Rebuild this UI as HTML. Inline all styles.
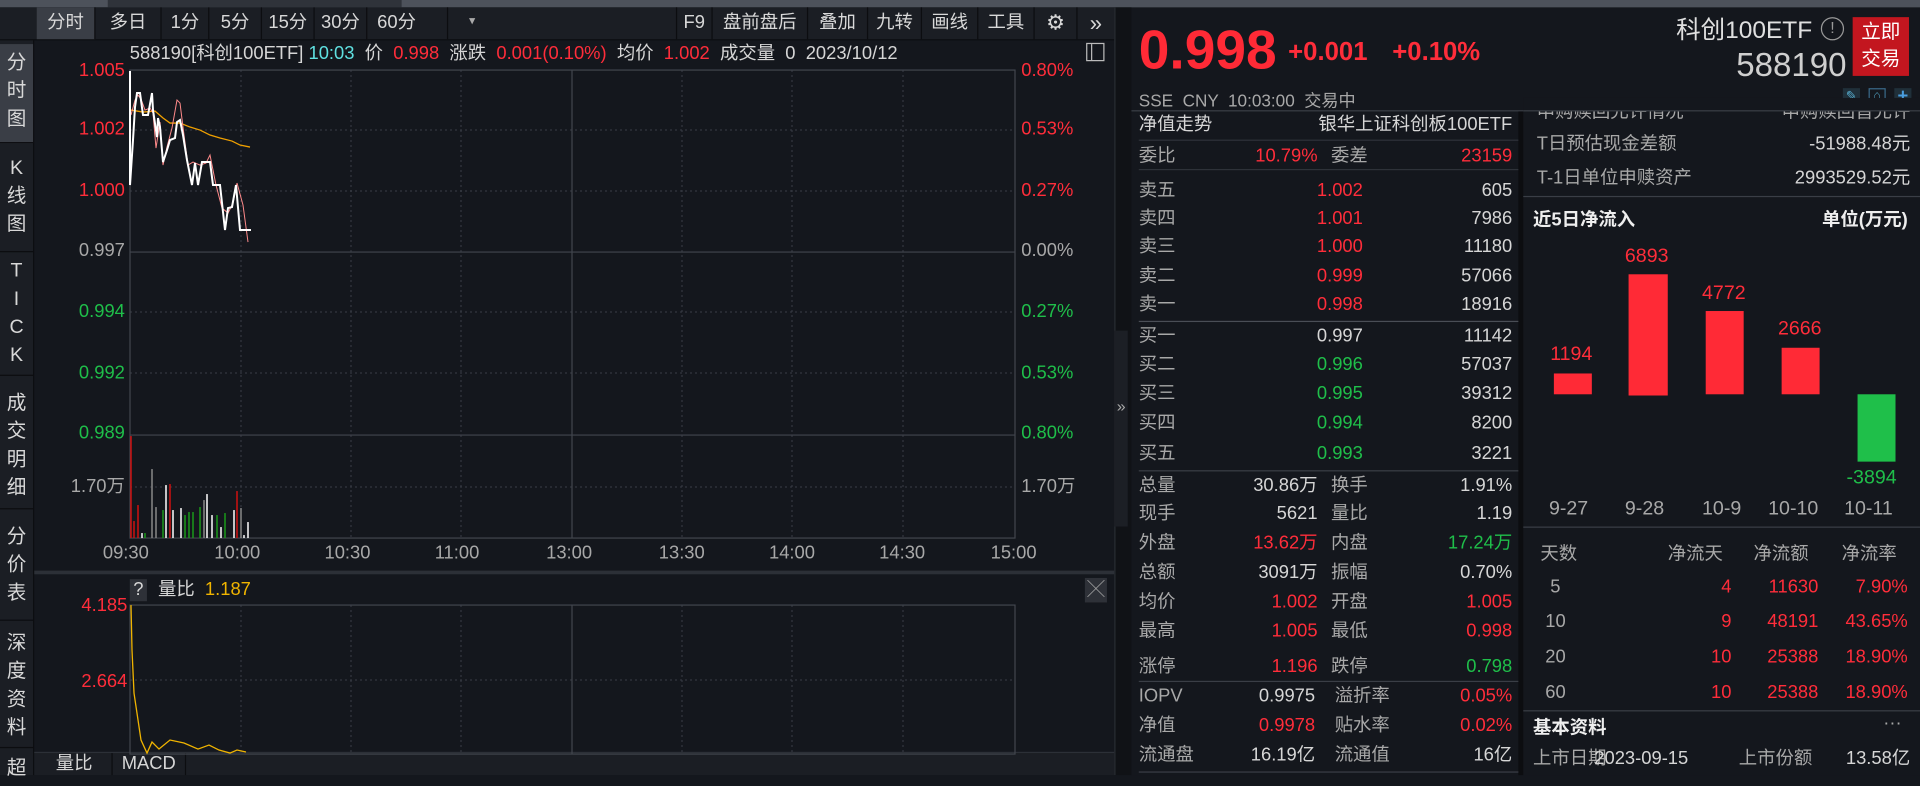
<!DOCTYPE html>
<html><head><meta charset="utf-8">
<style>
*{margin:0;padding:0;box-sizing:border-box}
html,body{width:1920px;height:775px;overflow:hidden;background:#14171d}
#w{position:absolute;left:0;top:0;width:1568px;height:633px;transform:scale(1.22449);transform-origin:0 0;background:#14171d;font-family:"Liberation Sans","Noto Sans CJK SC",sans-serif;color:#d6d6d6;font-size:15px}
.a{position:absolute;white-space:nowrap;line-height:18px}
.r{color:#ff2d3a}.g{color:#1fbf4a}.y{color:#f0b400}.c{color:#5fe0e0}.gr{color:#a8a8a8}
.tab{position:absolute;top:6px;height:26px;line-height:26px;text-align:center;font-size:15px;color:#d8d8d8;border-right:1px solid #0c0d10}
.hl{position:absolute;height:1px;background:#2e3239}
.side{position:absolute;left:0;width:27px;text-align:center;font-size:16px;line-height:23px;color:#d8d8d8;border-bottom:1px solid #0c0d10}
.rt{text-align:right}
</style></head><body>
<div id="w">
<div style="position:absolute;left:0;top:0;width:1568px;height:6px;background:#4d525b"></div>
<div style="position:absolute;left:88px;top:0;width:240px;height:6px;background:#2f333a"></div>
<div style="position:absolute;left:0;top:6px;width:910px;height:27px;background:#1b1e24;border-bottom:1px solid #0c0d10"></div>
<div class="tab" style="left:30px;width:48px;background:#3a3e46">分时</div>
<div class="tab" style="left:78px;width:54px">多日</div>
<div class="tab" style="left:132px;width:39px">1分</div>
<div class="tab" style="left:171px;width:43px">5分</div>
<div class="tab" style="left:214px;width:43px">15分</div>
<div class="tab" style="left:257px;width:43px">30分</div>
<div class="tab" style="left:300px;width:66px;text-align:left;padding-left:8px">60分</div>
<div class="a" style="left:383px;top:9px;font-size:10px;color:#aaa">▾</div>
<div class="tab" style="left:552px;width:30px;border-left:1px solid #0c0d10">F9</div>
<div class="tab" style="left:582px;width:78px">盘前盘后</div>
<div class="tab" style="left:660px;width:49px">叠加</div>
<div class="tab" style="left:709px;width:44px">九转</div>
<div class="tab" style="left:753px;width:46px">画线</div>
<div class="tab" style="left:799px;width:46px">工具</div>
<div class="tab" style="left:845px;width:35px;font-size:17px">⚙</div>
<div class="tab" style="left:880px;width:30px;border:none;font-size:18px">»</div>
<div style="position:absolute;left:0;top:33px;width:28px;height:600px;background:#1b1e24;border-right:1px solid #0c0d10"></div>
<div class="side" style="top:36px;height:81px;background:#3a3e46;padding-top:4px">分<br>时<br>图</div>
<div class="side" style="top:118px;height:88px;padding-top:8px">K<br>线<br>图</div>
<div class="side" style="top:207px;height:100px;padding-top:3px;line-height:23px">T<br>I<br>C<br>K</div>
<div class="side" style="top:308px;height:108px;padding-top:10px">成<br>交<br>明<br>细</div>
<div class="side" style="top:417px;height:90px;padding-top:10px">分<br>价<br>表</div>
<div class="side" style="top:508px;height:103px;padding-top:6px">深<br>度<br>资<br>料</div>
<div class="side" style="top:612px;height:30px;padding-top:4px;border:none">超</div>
<div class="a" style="left:106px;top:35px;font-size:15px">588190[科创100ETF] <span class="c">10:03</span> &nbsp;价 &nbsp;<span class="r">0.998</span> &nbsp;涨跌 &nbsp;<span class="r">0.001(0.10%)</span> &nbsp;均价 &nbsp;<span class="r">1.002</span> &nbsp;成交量 &nbsp;0 &nbsp;2023/10/12</div>
<div class="a" style="left:887px;top:35px;width:15px;height:15px;border:1px solid #bbb"></div>
<div class="a" style="left:891px;top:36px;width:1px;height:13px;background:#bbb"></div>
<div class="a r rt" style="left:40px;width:62px;top:49px">1.005</div>
<div class="a r rt" style="left:40px;width:62px;top:97px">1.002</div>
<div class="a r rt" style="left:40px;width:62px;top:147px">1.000</div>
<div class="a gr rt" style="left:40px;width:62px;top:196px">0.997</div>
<div class="a g rt" style="left:40px;width:62px;top:246px">0.994</div>
<div class="a g rt" style="left:40px;width:62px;top:296px">0.992</div>
<div class="a g rt" style="left:40px;width:62px;top:345px">0.989</div>
<div class="a gr rt" style="left:40px;width:62px;top:389px">1.70万</div>
<div class="a r" style="left:834px;top:49px">0.80%</div>
<div class="a r" style="left:834px;top:97px">0.53%</div>
<div class="a r" style="left:834px;top:147px">0.27%</div>
<div class="a gr" style="left:834px;top:196px">0.00%</div>
<div class="a g" style="left:834px;top:246px">0.27%</div>
<div class="a g" style="left:834px;top:296px">0.53%</div>
<div class="a g" style="left:834px;top:345px">0.80%</div>
<div class="a gr" style="left:834px;top:389px">1.70万</div>
<div class="a gr" style="left:84px;top:443px;font-size:15px">09:30</div>
<div class="a gr" style="left:175px;top:443px">10:00</div>
<div class="a gr" style="left:265px;top:443px">10:30</div>
<div class="a gr" style="left:355px;top:443px">11:00</div>
<div class="a gr" style="left:446px;top:443px">13:00</div>
<div class="a gr" style="left:538px;top:443px">13:30</div>
<div class="a gr" style="left:628px;top:443px">14:00</div>
<div class="a gr" style="left:718px;top:443px">14:30</div>
<div class="a gr" style="left:809px;top:443px">15:00</div>
<div style="position:absolute;left:28px;top:466px;width:882px;height:3px;background:#2c3037"></div>
<div class="a" style="left:106px;top:473px;width:14px;height:18px;background:#2e3138;text-align:center">?</div>
<div class="a" style="left:129px;top:473px">量比 &nbsp;<span class="y">1.187</span></div>
<div class="a" style="left:886px;top:472px;width:18px;height:20px;background:#2e3138;color:#aaa;text-align:center;font-size:14px">╳</div>
<div class="a r rt" style="left:40px;width:64px;top:486px">4.185</div>
<div class="a r rt" style="left:40px;width:64px;top:548px">2.664</div>
<div style="position:absolute;left:28px;top:614px;width:882px;height:19px;background:#1b1e24;border-top:1px solid #2c3037"></div>
<div class="a" style="left:30px;top:615px;width:62px;height:18px;border-right:1px solid #0c0d10;text-align:center">量比</div>
<div class="a" style="left:92px;top:615px;width:60px;height:18px;border-right:1px solid #0c0d10;text-align:center">MACD</div>
<div style="position:absolute;left:910px;top:6px;width:14px;height:627px;background:#101216;border-left:1px solid #2a2d33"></div>
<div style="position:absolute;left:910px;top:270px;width:11px;height:160px;background:#1c1f25"></div>
<div class="a gr" style="left:912px;top:323px;font-size:13px">»</div>
<svg style="position:absolute;left:0;top:0" width="1568" height="633" viewBox="0 0 1920 775">
<g stroke="#3a3e46" stroke-width="1" stroke-dasharray="2,3" fill="none">
<line x1="130" y1="130" x2="1015" y2="130"/><line x1="130" y1="191" x2="1015" y2="191"/>
<line x1="130" y1="312" x2="1015" y2="312"/><line x1="130" y1="373" x2="1015" y2="373"/>
<line x1="130" y1="487" x2="1015" y2="487"/><line x1="130" y1="680" x2="1015" y2="680"/>
<line x1="241" y1="70" x2="241" y2="538"/><line x1="351" y1="70" x2="351" y2="538"/><line x1="461" y1="70" x2="461" y2="538"/>
<line x1="682" y1="70" x2="682" y2="538"/><line x1="792" y1="70" x2="792" y2="538"/><line x1="903" y1="70" x2="903" y2="538"/>
<line x1="241" y1="605" x2="241" y2="754"/><line x1="351" y1="605" x2="351" y2="754"/><line x1="461" y1="605" x2="461" y2="754"/>
<line x1="682" y1="605" x2="682" y2="754"/><line x1="792" y1="605" x2="792" y2="754"/><line x1="903" y1="605" x2="903" y2="754"/>
</g>
<g stroke="#42464e" stroke-width="1.2" fill="none">
<rect x="130" y="70" width="885" height="468"/>
<line x1="130" y1="252" x2="1015" y2="252"/><line x1="130" y1="435" x2="1015" y2="435"/>
<line x1="572" y1="70" x2="572" y2="538"/>
<rect x="130" y="605" width="885" height="149"/>
<line x1="572" y1="605" x2="572" y2="754"/>
</g>
<polyline fill="none" stroke="#f0a000" stroke-width="1.3" points="131,110 143,112 155,111 163,118 170,123 180,123 190,127 200,130 210,135 220,138 232,141 240,145 250,147"/>
<polyline fill="none" stroke="#ff8a8a" stroke-width="1" points="131,115 135,100 138,95 141,99 145,110 150,108 153,113 156,148 160,122 163,165 167,147 172,128 177,100 180,103 184,135 188,165 193,162 200,165 206,163 210,155 216,185 222,208 228,213 233,203 237,183 243,205 248,242"/>
<polyline fill="none" stroke="#ffffff" stroke-width="2" points="130,71 130,185 133,140 135,107 137,93 140,93 143,115 148,115 152,93 153,110 157,137 158,118 160,127 163,162 167,150 170,140 175,138 177,122 180,120 183,135 187,160 192,185 195,163 198,185 202,162 210,162 213,185 220,185 225,230 228,208 232,207 236,185 240,230 251,230"/>
<g stroke-width="1.5">
<line x1="131" y1="538" x2="131" y2="436" stroke="#d01010"/>
<line x1="134" y1="538" x2="134" y2="521" stroke="#d01010"/>
<line x1="138" y1="538" x2="138" y2="505" stroke="#d01010"/>
<line x1="142" y1="538" x2="142" y2="533" stroke="#fff"/>
<line x1="145" y1="538" x2="145" y2="533" stroke="#1a9a1a"/>
<line x1="152" y1="538" x2="152" y2="469" stroke="#888"/>
<line x1="156" y1="538" x2="156" y2="507" stroke="#888"/>
<line x1="163" y1="538" x2="163" y2="510" stroke="#1a9a1a"/>
<line x1="166" y1="538" x2="166" y2="485" stroke="#fff"/>
<line x1="170" y1="538" x2="170" y2="484" stroke="#d01010"/>
<line x1="173" y1="538" x2="173" y2="510" stroke="#fff"/>
<line x1="181" y1="538" x2="181" y2="508" stroke="#fff"/>
<line x1="185" y1="538" x2="185" y2="515" stroke="#1a9a1a"/>
<line x1="189" y1="538" x2="189" y2="512" stroke="#1a9a1a"/>
<line x1="193" y1="538" x2="193" y2="512" stroke="#1a9a1a"/>
<line x1="200" y1="538" x2="200" y2="507" stroke="#1a9a1a"/>
<line x1="204" y1="538" x2="204" y2="500" stroke="#888"/>
<line x1="207" y1="538" x2="207" y2="494" stroke="#fff"/>
<line x1="212" y1="538" x2="212" y2="515" stroke="#fff"/>
<line x1="217" y1="538" x2="217" y2="515" stroke="#1a9a1a"/>
<line x1="221" y1="538" x2="221" y2="527" stroke="#fff"/>
<line x1="225" y1="538" x2="225" y2="513" stroke="#1a9a1a"/>
<line x1="234" y1="538" x2="234" y2="510" stroke="#fff"/>
<line x1="237" y1="538" x2="237" y2="491" stroke="#d01010"/>
<line x1="241" y1="538" x2="241" y2="508" stroke="#888"/>
<line x1="244" y1="538" x2="244" y2="535" stroke="#fff"/>
<line x1="248" y1="538" x2="248" y2="522" stroke="#fff"/>
</g>
<polyline fill="none" stroke="#f0b400" stroke-width="1.3" points="131,605 132,650 134,693 141,740 147,753 152,742 159,749 170,740 184,743 198,749 209,745 219,750 230,753 237,750 246,752"/>
</svg>
<div class="a r" style="left:930px;top:16px;font-size:45px;line-height:50px;font-weight:bold;color:#ff2a36">0.998</div>
<div class="a r" style="left:1052px;top:31px;font-size:21px;line-height:24px;font-weight:bold">+0.001</div>
<div class="a r" style="left:1137px;top:31px;font-size:21px;line-height:24px;font-weight:bold">+0.10%</div>
<div class="a rt" style="left:1320px;width:160px;top:13px;font-size:20px;line-height:24px;color:#e0e0e0">科创100ETF</div>
<div class="a" style="left:1487px;top:14px;width:19px;height:19px;border:1.5px solid #999;border-radius:50%;text-align:center;line-height:16px;font-size:13px;color:#999">!</div>
<div class="a" style="left:1513px;top:14px;width:46px;height:48px;background:#c3161f;color:#fff;font-size:16px;line-height:22px;text-align:center;padding-top:2px;white-space:normal">立即<br>交易</div>
<div class="a rt" style="left:1360px;width:148px;top:38px;font-size:27px;line-height:30px;color:#cfcfcf">588190</div>
<div class="a gr" style="left:930px;top:73px;font-size:14px">SSE &nbsp;CNY &nbsp;10:03:00 &nbsp;交易中</div>
<div class="a" style="left:1505px;top:72px;width:14px;height:14px;background:#20303a;color:#5ac;font-size:11px;line-height:14px;text-align:center">✎</div>
<div class="a" style="left:1526px;top:72px;width:14px;height:14px;border:1px solid #3a6a8a;color:#5ac;font-size:10px;line-height:12px;text-align:center">⌂</div>
<div class="a" style="left:1547px;top:72px;width:14px;height:14px;background:#20303a;color:#4a9ee0;font-size:15px;line-height:14px;text-align:center;font-weight:bold">+</div>
<div class="hl" style="left:924px;top:90px;width:644px;background:#3a3e46"></div>
<div style="position:absolute;left:1240px;top:91px;width:4px;height:542px;background:#0c0d10"></div>
<div class="a" style="left:930px;top:93px">净值走势</div>
<div class="a rt" style="left:1040px;width:195px;top:93px">银华上证科创板100ETF</div>
<div class="hl" style="left:930px;top:114px;width:310px"></div>
<div class="a gr" style="left:930px;top:119px">委比</div><div class="a r rt" style="left:1000px;width:76px;top:119px">10.79%</div>
<div class="a gr" style="left:1087px;top:119px">委差</div><div class="a r rt" style="left:1150px;width:85px;top:119px">23159</div>
<div class="hl" style="left:930px;top:138px;width:310px"></div>
<div class="a gr" style="left:930px;top:147px">卖五</div><div class="a r rt" style="left:1040px;width:73px;top:147px">1.002</div><div class="a rt" style="left:1150px;width:85px;top:147px">605</div>
<div class="a gr" style="left:930px;top:170px">卖四</div><div class="a r rt" style="left:1040px;width:73px;top:170px">1.001</div><div class="a rt" style="left:1150px;width:85px;top:170px">7986</div>
<div class="a gr" style="left:930px;top:193px">卖三</div><div class="a r rt" style="left:1040px;width:73px;top:193px">1.000</div><div class="a rt" style="left:1150px;width:85px;top:193px">11180</div>
<div class="a gr" style="left:930px;top:217px">卖二</div><div class="a r rt" style="left:1040px;width:73px;top:217px">0.999</div><div class="a rt" style="left:1150px;width:85px;top:217px">57066</div>
<div class="a gr" style="left:930px;top:240px">卖一</div><div class="a r rt" style="left:1040px;width:73px;top:240px">0.998</div><div class="a rt" style="left:1150px;width:85px;top:240px">18916</div>
<div class="hl" style="left:930px;top:262px;width:310px;background:#4a4e56"></div>
<div class="a gr" style="left:930px;top:266px">买一</div><div class="a rt" style="left:1040px;width:73px;top:266px">0.997</div><div class="a rt" style="left:1150px;width:85px;top:266px">11142</div>
<div class="a gr" style="left:930px;top:289px">买二</div><div class="a g rt" style="left:1040px;width:73px;top:289px">0.996</div><div class="a rt" style="left:1150px;width:85px;top:289px">57037</div>
<div class="a gr" style="left:930px;top:313px">买三</div><div class="a g rt" style="left:1040px;width:73px;top:313px">0.995</div><div class="a rt" style="left:1150px;width:85px;top:313px">39312</div>
<div class="a gr" style="left:930px;top:337px">买四</div><div class="a g rt" style="left:1040px;width:73px;top:337px">0.994</div><div class="a rt" style="left:1150px;width:85px;top:337px">8200</div>
<div class="a gr" style="left:930px;top:362px">买五</div><div class="a g rt" style="left:1040px;width:73px;top:362px">0.993</div><div class="a rt" style="left:1150px;width:85px;top:362px">3221</div>
<div class="hl" style="left:930px;top:384px;width:310px;background:#3a3e46"></div>
<div class="a gr" style="left:930px;top:388px">总量</div><div class="a rt" style="left:990px;width:86px;top:388px">30.86万</div><div class="a gr" style="left:1087px;top:388px">换手</div><div class="a rt" style="left:1150px;width:85px;top:388px">1.91%</div>
<div class="a gr" style="left:930px;top:411px">现手</div><div class="a rt" style="left:990px;width:86px;top:411px">5621</div><div class="a gr" style="left:1087px;top:411px">量比</div><div class="a rt" style="left:1150px;width:85px;top:411px">1.19</div>
<div class="a gr" style="left:930px;top:435px">外盘</div><div class="a r rt" style="left:990px;width:86px;top:435px">13.62万</div><div class="a gr" style="left:1087px;top:435px">内盘</div><div class="a g rt" style="left:1150px;width:85px;top:435px">17.24万</div>
<div class="a gr" style="left:930px;top:459px">总额</div><div class="a rt" style="left:990px;width:86px;top:459px">3091万</div><div class="a gr" style="left:1087px;top:459px">振幅</div><div class="a rt" style="left:1150px;width:85px;top:459px">0.70%</div>
<div class="a gr" style="left:930px;top:483px">均价</div><div class="a r rt" style="left:990px;width:86px;top:483px">1.002</div><div class="a gr" style="left:1087px;top:483px">开盘</div><div class="a r rt" style="left:1150px;width:85px;top:483px">1.005</div>
<div class="a gr" style="left:930px;top:507px">最高</div><div class="a r rt" style="left:990px;width:86px;top:507px">1.005</div><div class="a gr" style="left:1087px;top:507px">最低</div><div class="a r rt" style="left:1150px;width:85px;top:507px">0.998</div>
<div class="a gr" style="left:930px;top:536px">涨停</div><div class="a r rt" style="left:990px;width:86px;top:536px">1.196</div><div class="a gr" style="left:1087px;top:536px">跌停</div><div class="a g rt" style="left:1150px;width:85px;top:536px">0.798</div>
<div class="hl" style="left:930px;top:556px;width:310px;background:#3a3e46"></div>
<div class="a gr" style="left:930px;top:560px">IOPV</div><div class="a rt" style="left:990px;width:84px;top:560px">0.9975</div><div class="a gr" style="left:1090px;top:560px">溢折率</div><div class="a r rt" style="left:1150px;width:85px;top:560px">0.05%</div>
<div class="a gr" style="left:930px;top:584px">净值</div><div class="a r rt" style="left:990px;width:84px;top:584px">0.9978</div><div class="a gr" style="left:1090px;top:584px">贴水率</div><div class="a r rt" style="left:1150px;width:85px;top:584px">0.02%</div>
<div class="a gr" style="left:930px;top:608px">流通盘</div><div class="a rt" style="left:990px;width:84px;top:608px">16.19亿</div><div class="a gr" style="left:1090px;top:608px">流通值</div><div class="a rt" style="left:1150px;width:85px;top:608px">16亿</div>
<div class="hl" style="left:930px;top:630px;width:310px;background:#3a3e46"></div>
<div class="a gr" style="left:1255px;top:83px">申购赎回允许情况</div>
<div class="a gr rt" style="left:1400px;width:160px;top:83px">申购赎回皆允许</div>
<div style="position:absolute;left:1244px;top:80px;width:324px;height:11px;background:#14171d"></div>
<div class="hl" style="left:1244px;top:90px;width:324px;background:#3a3e46"></div>
<div class="a gr" style="left:1255px;top:109px">T日预估现金差额</div><div class="a rt" style="left:1400px;width:160px;top:109px">-51988.48元</div>
<div class="a gr" style="left:1255px;top:137px">T-1日单位申赎资产</div><div class="a rt" style="left:1400px;width:160px;top:137px">2993529.52元</div>
<div class="hl" style="left:1244px;top:160px;width:324px;background:#3a3e46"></div>
<div class="a" style="left:1252px;top:171px;font-weight:bold;color:#eee">近5日净流入</div>
<div class="a rt" style="left:1440px;width:118px;top:171px;font-weight:bold;color:#eee">单位(万元)</div>
<div style="position:absolute;left:1269px;top:305px;width:31px;height:17px;background:#ff2a36"></div>
<div style="position:absolute;left:1330px;top:224px;width:32px;height:99px;background:#ff2a36"></div>
<div style="position:absolute;left:1393px;top:254px;width:31px;height:68px;background:#ff2a36"></div>
<div style="position:absolute;left:1455px;top:284px;width:31px;height:38px;background:#ff2a36"></div>
<div style="position:absolute;left:1517px;top:322px;width:31px;height:55px;background:#1fbf4a"></div>
<div class="a r" style="left:1266px;top:281px;font-size:16px">1194</div>
<div class="a r" style="left:1327px;top:201px;font-size:16px">6893</div>
<div class="a r" style="left:1390px;top:231px;font-size:16px">4772</div>
<div class="a r" style="left:1452px;top:260px;font-size:16px">2666</div>
<div class="a g" style="left:1508px;top:382px;font-size:16px">-3894</div>
<div class="a gr" style="left:1265px;top:407px;font-size:16px">9-27</div>
<div class="a gr" style="left:1327px;top:407px;font-size:16px">9-28</div>
<div class="a gr" style="left:1390px;top:407px;font-size:16px">10-9</div>
<div class="a gr" style="left:1444px;top:407px;font-size:16px">10-10</div>
<div class="a gr" style="left:1506px;top:407px;font-size:16px">10-11</div>
<div class="hl" style="left:1244px;top:430px;width:324px;background:#3a3e46"></div>
<div class="a gr" style="left:1258px;top:444px">天数</div>
<div class="a gr" style="left:1362px;top:444px">净流天</div>
<div class="a gr" style="left:1432px;top:444px">净流额</div>
<div class="a gr" style="left:1504px;top:444px">净流率</div>
<div class="a gr" style="left:1266px;top:471px">5</div><div class="a r rt" style="left:1380px;width:34px;top:471px">4</div><div class="a r rt" style="left:1420px;width:65px;top:471px">11630</div><div class="a r rt" style="left:1490px;width:68px;top:471px">7.90%</div>
<div class="a gr" style="left:1262px;top:499px">10</div><div class="a r rt" style="left:1380px;width:34px;top:499px">9</div><div class="a r rt" style="left:1420px;width:65px;top:499px">48191</div><div class="a r rt" style="left:1490px;width:68px;top:499px">43.65%</div>
<div class="a gr" style="left:1262px;top:528px">20</div><div class="a r rt" style="left:1380px;width:34px;top:528px">10</div><div class="a r rt" style="left:1420px;width:65px;top:528px">25388</div><div class="a r rt" style="left:1490px;width:68px;top:528px">18.90%</div>
<div class="a gr" style="left:1262px;top:557px">60</div><div class="a r rt" style="left:1380px;width:34px;top:557px">10</div><div class="a r rt" style="left:1420px;width:65px;top:557px">25388</div><div class="a r rt" style="left:1490px;width:68px;top:557px">18.90%</div>
<div class="hl" style="left:1244px;top:580px;width:324px;background:#3a3e46"></div>
<div class="a" style="left:1252px;top:586px;font-weight:bold;color:#eee">基本资料</div>
<div class="a gr" style="left:1538px;top:582px">···</div>
<div class="a gr" style="left:1252px;top:611px">上市日期</div>
<div class="a" style="left:1302px;top:611px">2023-09-15</div>
<div class="a gr" style="left:1420px;top:611px">上市份额</div>
<div class="a rt" style="left:1480px;width:80px;top:611px">13.58亿</div>
</div>
</body></html>
